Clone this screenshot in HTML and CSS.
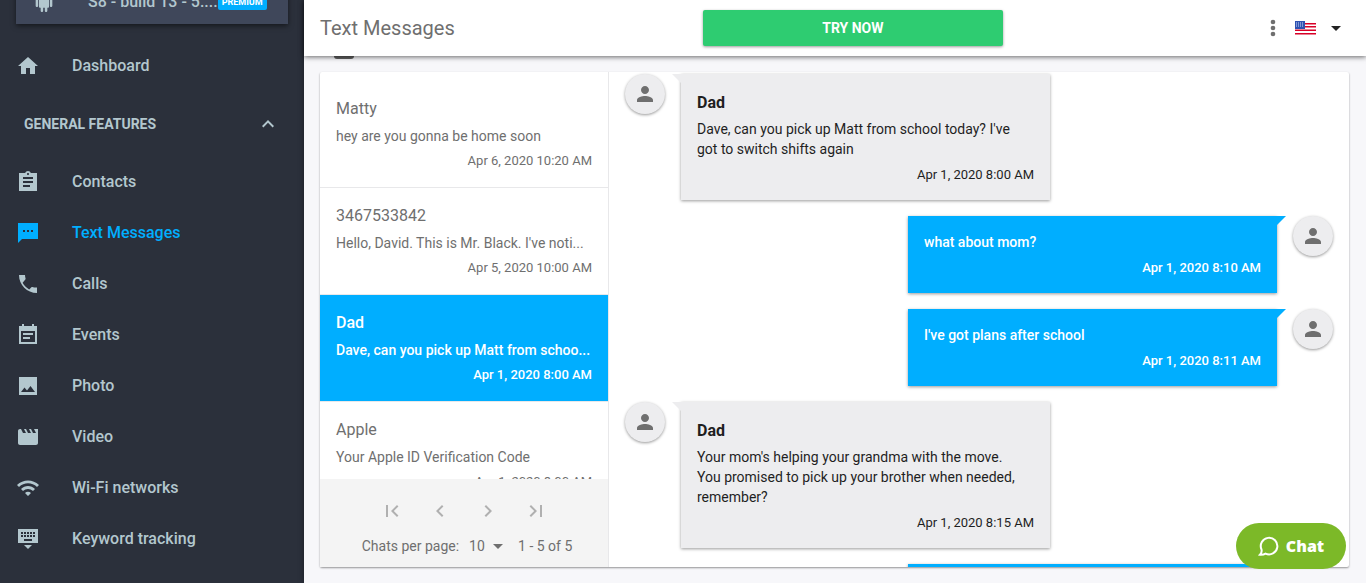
FILE: index.html
```html
<!DOCTYPE html>
<html lang="en">
<head>
    <meta charset="UTF-8">
    <meta name="viewport" content="width=device-width, initial-scale=1.0">
    <title>Text Messages</title>
    <link rel="stylesheet" href="styles.css">
</head>
<body>
    <!-- shared icons -->
    <svg class="sprite" aria-hidden="true">
        <symbol id="person" viewBox="0 0 24 24"><path d="M12 12c2.21 0 4-1.79 4-4s-1.79-4-4-4-4 1.79-4 4 1.79 4 4 4zm0 2c-2.67 0-8 1.34-8 4v2h16v-2c0-2.66-5.33-4-8-4z"/></symbol>
    </svg>

    <aside class="sidebar">
        <a href="#" class="device">
            <svg class="icon" viewBox="0 0 24 24"><path d="M6 18c0 .55.45 1 1 1h1v3.5c0 .83.67 1.5 1.5 1.5s1.5-.67 1.5-1.5V19h2v3.5c0 .83.67 1.5 1.5 1.5s1.5-.67 1.5-1.5V19h1c.55 0 1-.45 1-1V8H6v10zM3.500 8C2.670 8 2 8.670 2 9.500v7c0 .83.67 1.500 1.500 1.500S5 17.330 5 16.500v-7C5 8.670 4.330 8 3.500 8zm17 0c-.83 0-1.500.67-1.500 1.500v7c0 .83.67 1.500 1.500 1.500s1.500-.67 1.500-1.500v-7c0-.83-.67-1.500-1.500-1.500zM7 7h10C17 4.500 15 2.500 12 2.500S7 4.500 7 7z"/></svg>
            <span class="device-name">S8 - build 13 - 5....</span>
            <span class="premium">PREMIUM</span>
        </a>
        <nav class="menu">
            <a href="#" class="menu-item">
                <svg class="icon" viewBox="0 0 24 24"><path d="M10 20v-6h4v6h5v-8h3L12 3 2 12h3v8z"/></svg>
                Dashboard
            </a>
            <button type="button" class="menu-group">
                General features
                <svg class="icon" viewBox="0 0 24 24"><path d="M12 8l-6 6 1.410 1.410L12 10.830l4.590 4.580L18 14z"/></svg>
            </button>
            <a href="#" class="menu-item">
                <svg class="icon" viewBox="0 0 24 24"><path d="M21 3h-6.180C14.400 1.840 13.300 1 12 1s-2.400.84-2.820 2H3v18h18V3zm-9 0c.55 0 1 .45 1 1s-.45 1-1 1-1-.45-1-1 .45-1 1-1zm2 14H7v-2h7v2zm3-4H7v-2h10v2zm0-4H7V7h10v2z"/></svg>
                Contacts
            </a>
            <a href="#" class="menu-item active">
                <svg class="icon" viewBox="0 0 24 24"><path d="M2 2v20l4-4h16V2H2zm7 9H7V9h2v2zm4 0h-2V9h2v2zm4 0h-2V9h2v2z"/></svg>
                Text Messages
            </a>
            <a href="#" class="menu-item">
                <svg class="icon" viewBox="0 0 24 24"><path d="M6.620 10.790c1.440 2.830 3.760 5.140 6.590 6.590l2.200-2.200c.27-.27.67-.36 1.020-.24 1.120.37 2.330.57 3.570.57H21V21C11 21 3 13 3 3h6c0 1.250.2 2.450.57 3.570.11.35.03.74-.25 1.020l-2.700 3.200z"/></svg>
                Calls
            </a>
            <a href="#" class="menu-item">
                <svg class="icon" viewBox="0 0 24 24"><path d="M17 10H7v2h10v-2zm4-7h-3V1h-2v2H8V1H6v2H3v18h18V3zm-2 16H5V8h14v11zm-5-5H7v2h7v-2z"/></svg>
                Events
            </a>
            <a href="#" class="menu-item">
                <svg class="icon" viewBox="0 0 24 24"><path d="M21 21V3H3v18h18zM8.500 13.500l2.500 3.010L14.500 12l4.500 6H5l3.500-4.500z"/></svg>
                Photo
            </a>
            <a href="#" class="menu-item">
                <svg class="icon" viewBox="0 0 24 24"><path d="M18 4l2 4h-3l-2-4h-2l2 4h-3l-2-4H8l2 4H7L5 4H4c-1.100 0-1.990.9-1.990 2L2 18c0 1.100.9 2 2 2h16c1.100 0 2-.9 2-2V4h-4z"/></svg>
                Video
            </a>
            <a href="#" class="menu-item">
                <svg class="icon" viewBox="0 0 24 24"><path d="M1 9l2 2c4.970-4.970 13.030-4.970 18 0l2-2C16.930 2.930 7.080 2.930 1 9zm8 8l3 3 3-3c-1.650-1.660-4.340-1.660-6 0zm-4-4l2 2c2.760-2.760 7.240-2.760 10 0l2-2C15.140 9.140 8.870 9.140 5 13z"/></svg>
                Wi-Fi networks
            </a>
            <a href="#" class="menu-item">
                <svg class="icon" viewBox="0 0 24 24"><path d="M22 2H2v14h20V2zM11 5h2v2h-2V5zm0 3h2v2h-2V8zM8 5h2v2H8V5zm0 3h2v2H8V8zm-1 2H5V8h2v2zm0-3H5V5h2v2zm9 7H8v-2h8v2zm0-4h-2V8h2v2zm0-3h-2V5h2v2zm3 3h-2V8h2v2zm0-3h-2V5h2v2zm-7 15l4-4H8l4 4z"/></svg>
                Keyword tracking
            </a>
        </nav>
    </aside>

    <div class="page">
        <header class="topbar">
            <h1>Text Messages</h1>
            <button type="button" class="try">TRY NOW</button>
            <div class="actions">
                <button type="button" class="more" aria-label="More">
                    <svg class="dots" viewBox="0 0 6 18"><circle cx="3" cy="3" r="2.300"/><circle cx="3" cy="9" r="2.300"/><circle cx="3" cy="15" r="2.300"/></svg>
                </button>
                <button type="button" class="lang" aria-label="Language">
                    <svg class="flag" viewBox="0 0 21 14">
                        <rect width="21" height="14" fill="#fff"/>
                        <path fill="#d80027" d="M0 2h21v1.500H0zM0 5h21v1.500H0zM0 8.500h21V10H0zM0 12h21v1.500H0z"/>
                        <rect width="10" height="8" fill="#2e52b2"/>
                        <path fill="#7f97d4" d="M1 1h1v5H1zM3 1h1v5H3zM5 1h1v5H5zM7 1h1v5H7z"/>
                    </svg>
                    <svg class="caret" viewBox="0 0 10 5"><path d="M0 0h10L5 5z"/></svg>
                </button>
            </div>
        </header>

        <main class="content">
            <div class="toolbar">
                <input type="checkbox" class="select-all" aria-label="Select all">
            </div>
            <div class="panel">
                <section class="chats">
                    <div class="chat-list">
                        <a href="#" class="chat">
                            <span class="chat-name">Matty</span>
                            <span class="chat-text">hey are you gonna be home soon</span>
                            <time class="chat-time">Apr 6, 2020 10:20 AM</time>
                        </a>
                        <a href="#" class="chat">
                            <span class="chat-name">3467533842</span>
                            <span class="chat-text">Hello, David. This is Mr. Black. I've noti...</span>
                            <time class="chat-time">Apr 5, 2020 10:00 AM</time>
                        </a>
                        <a href="#" class="chat selected">
                            <span class="chat-name">Dad</span>
                            <span class="chat-text">Dave, can you pick up Matt from schoo...</span>
                            <time class="chat-time">Apr 1, 2020 8:00 AM</time>
                        </a>
                        <a href="#" class="chat">
                            <span class="chat-name">Apple</span>
                            <span class="chat-text">Your Apple ID Verification Code</span>
                            <time class="chat-time">Apr 1, 2020 8:00 AM</time>
                        </a>
                    </div>
                    <footer class="pager">
                        <div class="pager-buttons">
                            <button type="button" aria-label="First page"><svg class="icon" viewBox="0 0 24 24"><path d="M18.410 16.590L13.820 12l4.590-4.590L17 6l-6 6 6 6zM6 6h2v12H6z"/></svg></button>
                            <button type="button" aria-label="Previous page"><svg class="icon" viewBox="0 0 24 24"><path d="M15.410 7.410L14 6l-6 6 6 6 1.410-1.410L10.830 12z"/></svg></button>
                            <button type="button" aria-label="Next page"><svg class="icon" viewBox="0 0 24 24"><path d="M10 6L8.590 7.410 13.170 12l-4.580 4.590L10 18l6-6z"/></svg></button>
                            <button type="button" aria-label="Last page"><svg class="icon" viewBox="0 0 24 24"><path d="M5.590 7.410L10.180 12l-4.590 4.590L7 18l6-6-6-6zM16 6h2v12h-2z"/></svg></button>
                        </div>
                        <div class="pager-info">
                            <label for="perPage">Chats per page:</label>
                            <span class="per-page">
                                <select id="perPage">
                                    <option>10</option>
                                    <option>20</option>
                                </select>
                                <svg class="caret" viewBox="0 0 10 5"><path d="M0 0h10L5 5z"/></svg>
                            </span>
                            <span>1 - 5 of 5</span>
                        </div>
                    </footer>
                </section>

                <section class="messages">
                    <div class="message">
                        <span class="avatar"><svg class="icon"><use href="#person"/></svg></span>
                        <div class="bubble">
                            <h2>Dad</h2>
                            <p>Dave, can you pick up Matt from school today? I've got to switch shifts again</p>
                            <time>Apr 1, 2020 8:00 AM</time>
                        </div>
                    </div>
                    <div class="message mine">
                        <span class="avatar"><svg class="icon"><use href="#person"/></svg></span>
                        <div class="bubble">
                            <p>what about mom?</p>
                            <time>Apr 1, 2020 8:10 AM</time>
                        </div>
                    </div>
                    <div class="message mine">
                        <span class="avatar"><svg class="icon"><use href="#person"/></svg></span>
                        <div class="bubble">
                            <p>I've got plans after school</p>
                            <time>Apr 1, 2020 8:11 AM</time>
                        </div>
                    </div>
                    <div class="message">
                        <span class="avatar"><svg class="icon"><use href="#person"/></svg></span>
                        <div class="bubble">
                            <h2>Dad</h2>
                            <p>Your mom's helping your grandma with the move. You promised to pick up your brother when needed, remember?</p>
                            <time>Apr 1, 2020 8:15 AM</time>
                        </div>
                    </div>
                    <div class="message mine">
                        <span class="avatar"><svg class="icon"><use href="#person"/></svg></span>
                        <div class="bubble"></div>
                    </div>
                </section>
            </div>
        </main>
    </div>

    <button type="button" class="chat-button">
        <svg class="chat-icon" viewBox="0 0 22 22"><path d="M3.500 14.500A8.300 8.300 0 1 1 7.500 18.600Q5.500 19.900 2 19.700Q4.200 17.500 3.500 14.500z"/></svg>
        Chat
    </button>
</body>
</html>
```
FILE: styles.css
```css
* {
    box-sizing: border-box;
}
body {
    margin: 0;
    display: flex;
    height: 100vh;
    overflow: hidden;
    font-family: Roboto, Arial, sans-serif;
    font-size: 14px;
    line-height: 20px;
    color: #6f6f6f;
    background-color: #f7f7fa;
}
a {
    color: inherit;
    text-decoration: none;
}
button, select {
    font: inherit;
    color: inherit;
    background: none;
    border: none;
    padding: 0;
    cursor: pointer;
}
h1, h2, p {
    margin: 0;
}
svg {
    display: block;
    fill: currentColor;
    flex-shrink: 0;
}
.sprite {
    display: none;
}
.icon {
    width: 24px;
    height: 24px;
}

/* sidebar */
.sidebar {
    width: 304px;
    flex-shrink: 0;
    background-color: #2b303b;
    color: #b3c7ce;
    overflow: hidden;
}
.device {
    display: flex;
    align-items: center;
    height: 44px;
    margin: -20px 16px 16px;
    padding: 0 24px 0 16px;
    background-color: #3f475a;
    box-shadow: 0 2px 5px rgba(0, 0, 0, 0.5);
    font-size: 16px;
    font-weight: 500;
}
.device .icon {
    height: 20px;
}
.device-name {
    flex: 1;
    margin-left: 32px;
    white-space: nowrap;
}
.premium {
    padding: 0 4px;
    border-radius: 2px;
    background-color: #00aeff;
    color: #fff;
    font-size: 9px;
    font-weight: 700;
    line-height: 16px;
}
.menu-item {
    display: flex;
    align-items: center;
    gap: 32px;
    height: 51px;
    padding: 0 16px;
    font-size: 16px;
    font-weight: 500;
}
.menu-item.active {
    color: #00aeff;
}
.menu-group {
    display: flex;
    align-items: center;
    justify-content: space-between;
    width: 100%;
    height: 65px;
    padding: 0 24px;
    font-weight: 700;
    text-transform: uppercase;
}

/* top bar */
.page {
    flex: 1;
    min-width: 0;
    display: flex;
    flex-direction: column;
    box-shadow: 0 0 6px rgba(0, 0, 0, 0.4);
}
.topbar {
    display: flex;
    align-items: center;
    justify-content: space-between;
    height: 56px;
    flex-shrink: 0;
    padding: 0 16px;
    background-color: #fff;
    box-shadow: 0 1px 5px rgba(0, 0, 0, 0.6);
    z-index: 1;
}
.topbar h1 {
    font-size: 20px;
    font-weight: 400;
    line-height: 28px;
}
.try {
    width: 300px;
    height: 36px;
    border-radius: 2px;
    background-color: #2ecc71;
    box-shadow: 0 1px 3px rgba(0, 0, 0, 0.4);
    color: #fff;
    font-weight: 700;
}
.actions {
    display: flex;
    align-items: center;
}
.more {
    display: flex;
    justify-content: center;
    width: 44px;
}
.dots {
    width: 6px;
    height: 18px;
}
.lang {
    display: flex;
    align-items: center;
    gap: 15px;
    padding-right: 9px;
    color: #222;
}
.flag {
    width: 21px;
    height: 14px;
}
.caret {
    width: 10px;
    height: 5px;
}

/* content */
.content {
    flex: 1;
    min-height: 0;
    display: flex;
    flex-direction: column;
    padding: 0 17px 16px 16px;
}
.toolbar {
    height: 20px;
    margin: -17px 0 13px;
    padding: 0 14px;
}
.select-all {
    appearance: none;
    display: block;
    width: 20px;
    height: 20px;
    margin: 0;
    border: 3px solid #616161;
    border-radius: 3px;
}
.panel {
    flex: 1;
    min-height: 0;
    display: flex;
    background-color: #fff;
    border-radius: 2px;
    box-shadow: 0 1px 2px rgba(0, 0, 0, 0.4);
}

/* chat list */
.chats {
    display: flex;
    flex-direction: column;
    width: 289px;
    flex-shrink: 0;
    border-right: 1px solid #e8e8ea;
}
.chat-list {
    flex: 1;
    min-height: 0;
    padding-top: 9px;
    overflow: hidden;
}
.chat {
    display: block;
    padding: 16px;
    border-bottom: 1px solid #e8e8ea;
}
.chat-name {
    display: block;
    font-size: 16px;
    line-height: 24px;
}
.chat-text {
    display: block;
    line-height: 30px;
    white-space: nowrap;
}
.chat-time {
    display: block;
    text-align: right;
    font-size: 13px;
}
.chat.selected {
    background-color: #00aeff;
    color: #fff;
    font-weight: 500;
}
.pager {
    padding: 8px 16px 10px;
    background-color: #f4f4f4;
}
.pager-buttons {
    display: flex;
    justify-content: center;
}
.pager-buttons button {
    display: flex;
    align-items: center;
    justify-content: center;
    width: 48px;
    height: 48px;
    color: #b0b0b0;
}
.pager-info {
    display: flex;
    justify-content: center;
    gap: 10px;
    padding-left: 6px;
    line-height: 22px;
}
.per-page {
    display: flex;
    align-items: center;
    margin-right: 5px;
}
.per-page select {
    appearance: none;
    width: 24px;
}

/* messages */
.messages {
    flex: 1;
    min-width: 0;
    display: flex;
    flex-direction: column;
    gap: 16px;
    padding-top: 2px;
    overflow: hidden;
}
.message {
    display: flex;
    align-items: flex-start;
    gap: 16px;
    padding: 0 16px;
}
.message.mine {
    flex-direction: row-reverse;
}
.avatar {
    display: flex;
    align-items: center;
    justify-content: center;
    width: 40px;
    height: 40px;
    border-radius: 50%;
    background-color: #ededef;
    box-shadow: 0 1px 3px rgba(0, 0, 0, 0.4);
}
.bubble {
    position: relative;
    width: calc(50% + 15px);
    min-height: 77px;
    padding: 16px 16px 15px;
    background-color: #ededef;
    box-shadow: 0 1px 3px rgba(0, 0, 0, 0.4);
    color: #1f1f1f;
}
.bubble::before {
    content: "";
    position: absolute;
    top: 0;
    right: 100%;
    border-top: 9px solid #ededef;
    border-left: 9px solid transparent;
}
.mine .bubble {
    background-color: #00aeff;
    color: #fff;
    font-weight: 500;
}
.mine .bubble::before {
    right: auto;
    left: 100%;
    border-top-color: #00aeff;
    border-left: none;
    border-right: 9px solid transparent;
}
.bubble h2 {
    margin-bottom: 3px;
    font-size: 16px;
    font-weight: 700;
    line-height: 26px;
}
.bubble p {
    padding-right: 8px;
}
.bubble time {
    display: block;
    margin-top: 6px;
    font-size: 13px;
    text-align: right;
}

.chat-button {
    position: fixed;
    right: 20px;
    bottom: 14px;
    z-index: 2;
    display: flex;
    align-items: center;
    justify-content: center;
    gap: 6px;
    width: 110px;
    height: 46px;
    border-radius: 23px;
    background-color: #7cb928;
    color: #fff;
    font-family: "Noto Sans", sans-serif;
    font-size: 16px;
    font-weight: 900;
}
.chat-icon {
    width: 22px;
    height: 22px;
    fill: none;
    stroke: #fff;
    stroke-width: 2;
}
```
